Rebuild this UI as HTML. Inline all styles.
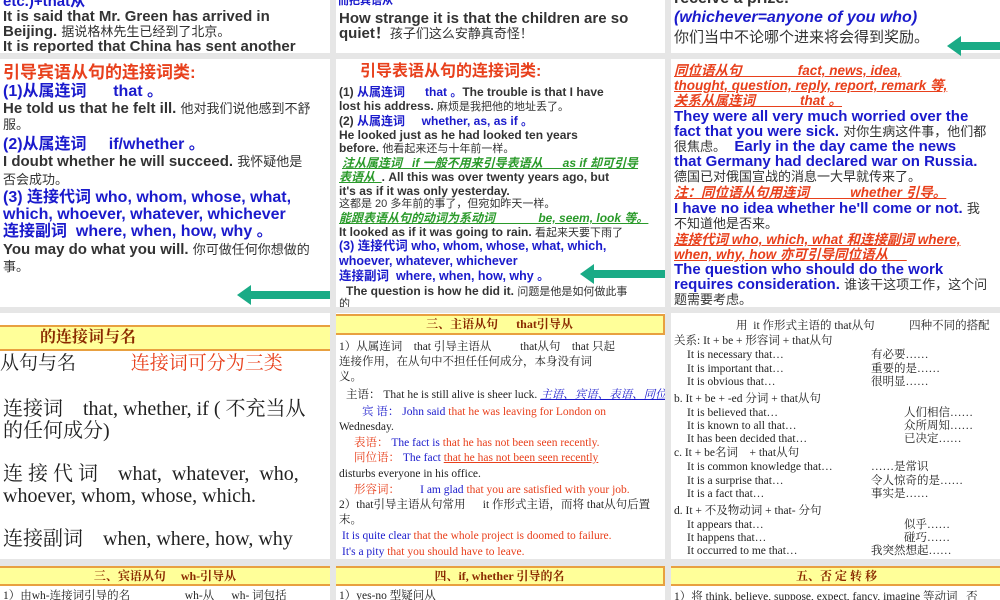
<!DOCTYPE html><html><head><meta charset="utf-8"><style>
body{margin:0;width:1000px;height:600px;background:#e6e6e6;overflow:hidden;position:relative;font-family:"Liberation Sans","Noto Sans CJK SC",sans-serif}
.p{position:absolute;background:#fff;overflow:hidden}
.t{position:absolute;white-space:nowrap;font-size:13px;font-weight:bold;color:#333;line-height:15px}
.b{color:#1a1acc}.r{color:#e8401c}.g{color:#2a9a2a}.i{font-style:italic;text-decoration:underline}
.s{font-family:"Liberation Serif","Noto Serif CJK SC",serif;font-weight:normal;font-size:11.5px;color:#222}
.hd{position:absolute;background:#ffff99;border:2px solid #e8a040;text-align:center;font-family:"Liberation Serif","Noto Serif CJK SC",serif;font-weight:bold;font-size:12px;color:#8a2a00}
.ar{position:absolute;width:0;height:0;border-top:10px solid transparent;border-bottom:10px solid transparent;border-right:14px solid #1aab86}
.ab{position:absolute;height:8px;background:#1aab86}
.L .t{font-size:15px}
.L .t .c{font-size:13px;font-weight:normal}
</style></head><body>
<div class="p L" style="left:0;top:0;width:330px;height:53px">
<div class="t b" style="left:3px;top:-6px">etc.)+that从</div>
<div class="t" style="left:3px;top:9px">It is said that Mr. Green has arrived in</div>
<div class="t" style="left:3px;top:24px">Beijing. <span class="c">据说格林先生已经到了北京。</span></div>
<div class="t" style="left:3px;top:39px">It is reported that China has sent another</div></div>
<div class="p L" style="left:336px;top:0;width:329px;height:53px">
<div class="t b" style="left:2px;top:-6px;font-size:11px">而把宾语从</div>
<div class="t" style="left:3px;top:11px">How strange it is that the children are so</div>
<div class="t" style="left:3px;top:26px">quiet！<span class="c">孩子们这么安静真奇怪！</span></div></div>
<div class="p" style="left:671px;top:0;width:329px;height:53px">
<div class="t" style="left:3px;top:-9px;font-size:16px">receive a prize.</div>
<div class="t b" style="left:3px;top:10px;font-size:16px;font-style:italic">(whichever=anyone of you who)</div>
<div class="t" style="left:3px;top:30px;font-weight:normal;font-size:15px">你们当中不论哪个进来将会得到奖励。</div></div>
<div class="ar" style="left:947px;top:36px"></div><div class="ab" style="left:960px;top:42px;width:40px"></div>

<div class="p L" style="left:0;top:59px;width:330px;height:248px">
<div class="t r" style="left:3px;top:6px;font-size:17px">引导宾语从句的连接词类:</div>
<div class="t b" style="left:3px;top:25px;font-size:16px">(1)从属连词 &nbsp;&nbsp;&nbsp;&nbsp; that 。</div>
<div class="t" style="left:3px;top:42px">He told us that he felt ill. <span class="c">他对我们说他感到不舒</span></div>
<div class="t c" style="left:3px;top:58px;font-size:13px;font-weight:normal">服。</div>
<div class="t b" style="left:3px;top:78px;font-size:16px">(2)从属连词 &nbsp;&nbsp;&nbsp; if/whether 。</div>
<div class="t" style="left:3px;top:95px">I doubt whether he will succeed. <span class="c">我怀疑他是</span></div>
<div class="t" style="left:3px;top:113px;font-size:13px;font-weight:normal">否会成功。</div>
<div class="t b" style="left:3px;top:131px;font-size:16px">(3) 连接代词 who, whom, whose, what,</div>
<div class="t b" style="left:3px;top:148px;font-size:16px">which, whoever, whatever, whichever</div>
<div class="t b" style="left:3px;top:165px;font-size:16px">连接副词 &nbsp;where, when, how, why 。</div>
<div class="t" style="left:3px;top:183px">You may do what you will. <span class="c">你可做任何你想做的</span></div>
<div class="t" style="left:3px;top:200px;font-size:13px;font-weight:normal">事。</div>
<div class="ar" style="left:237px;top:226px"></div><div class="ab" style="left:250px;top:232px;width:80px"></div></div>

<div class="p" style="left:336px;top:59px;width:329px;height:248px">
<div class="t r" style="left:24px;top:5px;font-size:16px">引导表语从句的连接词类:</div>
<div class="t" style="left:3px;top:26px;font-size:12px">(1) <span class="b">从属连词 &nbsp;&nbsp;&nbsp;&nbsp; that 。</span>The trouble is that I have</div>
<div class="t" style="left:3px;top:40px;font-size:12px">lost his address. <span style="font-weight:normal;font-size:11px">麻烦是我把他的地址丢了。</span></div>
<div class="t" style="left:3px;top:55px;font-size:12px">(2) <span class="b">从属连词 &nbsp;&nbsp;&nbsp; whether, as, as if 。</span></div>
<div class="t" style="left:3px;top:69px;font-size:12px">He looked just as he had looked ten years</div>
<div class="t" style="left:3px;top:82px;font-size:12px">before. <span style="font-weight:normal;font-size:11px">他看起来还与十年前一样。</span></div>
<div class="t g i" style="left:6px;top:97px;font-size:12px">注从属连词 &nbsp; if 一般不用来引导表语从 &nbsp;&nbsp;&nbsp;&nbsp; as if 却可引导</div>
<div class="t" style="left:3px;top:111px;font-size:12px"><span class="g i">表语从 &nbsp;</span>. All this was over twenty years ago, but</div>
<div class="t" style="left:3px;top:125px;font-size:12px">it's as if it was only yesterday.</div>
<div class="t" style="left:3px;top:138px;font-weight:normal;font-size:11px">这都是 20 多年前的事了，但宛如昨天一样。</div>
<div class="t g i" style="left:3px;top:152px;font-size:12px">能跟表语从句的动词为系动词 &nbsp;&nbsp;&nbsp;&nbsp;&nbsp;&nbsp;&nbsp;&nbsp;&nbsp;&nbsp;&nbsp; be, seem, look 等。</div>
<div class="t" style="left:3px;top:166px;font-size:12px">It looked as if it was going to rain. <span style="font-weight:normal;font-size:11px">看起来天要下雨了</span></div>
<div class="t b" style="left:3px;top:180px;font-size:12.5px">(3) 连接代词 who, whom, whose, what, which,</div>
<div class="t b" style="left:3px;top:195px;font-size:12.5px">whoever, whatever, whichever</div>
<div class="t b" style="left:3px;top:210px;font-size:12.5px">连接副词 &nbsp;where, when, how, why 。</div>
<div class="t" style="left:10px;top:225px;font-size:12px">The question is how he did it. <span style="font-weight:normal;font-size:11px">问题是他是如何做此事</span></div>
<div class="t" style="left:3px;top:238px;font-weight:normal;font-size:11px">的</div>
<div class="ar" style="left:244px;top:205px"></div><div class="ab" style="left:257px;top:211px;width:72px"></div></div>

<div class="p L" style="left:671px;top:59px;width:329px;height:248px">
<div class="t r i" style="left:3px;top:4px;font-size:13.5px">同位语从句 &nbsp;&nbsp;&nbsp;&nbsp;&nbsp;&nbsp;&nbsp;&nbsp;&nbsp;&nbsp;&nbsp;&nbsp;&nbsp; fact, news, idea,</div>
<div class="t r i" style="left:3px;top:19px;font-size:13.5px">thought, question, reply, report, remark 等,</div>
<div class="t r i" style="left:3px;top:34px;font-size:13.5px">关系从属连词 &nbsp;&nbsp;&nbsp;&nbsp;&nbsp;&nbsp;&nbsp;&nbsp;&nbsp;&nbsp; that 。</div>
<div class="t b" style="left:3px;top:50px">They were all very much worried over the</div>
<div class="t" style="left:3px;top:65px"><span class="b">fact that you were sick.</span> <span class="c">对你生病这件事，他们都</span></div>
<div class="t" style="left:3px;top:80px"><span class="c">很焦虑。</span> &nbsp;<span class="b">Early in the day came the news</span></div>
<div class="t b" style="left:3px;top:95px">that Germany had declared war on Russia.</div>
<div class="t" style="left:3px;top:110px;font-weight:normal;font-size:13px">德国已对俄国宣战的消息一大早就传来了。</div>
<div class="t r i" style="left:3px;top:126px;font-size:13.5px">注：同位语从句用连词 &nbsp;&nbsp;&nbsp;&nbsp;&nbsp;&nbsp;&nbsp;&nbsp;&nbsp; whether 引导。</div>
<div class="t" style="left:3px;top:142px"><span class="b">I have no idea whether he'll come or not.</span> <span class="c">我</span></div>
<div class="t" style="left:3px;top:157px;font-weight:normal;font-size:13px">不知道他是否来。</div>
<div class="t r i" style="left:3px;top:173px;font-size:13.5px">连接代词 who, which, what 和连接副词 where,</div>
<div class="t r i" style="left:3px;top:188px;font-size:13.5px">when, why, how 亦可引导同位语从 &nbsp;&nbsp;&nbsp;&nbsp;</div>
<div class="t b" style="left:3px;top:203px">The question who should do the work</div>
<div class="t" style="left:3px;top:218px"><span class="b">requires consideration.</span> <span class="c">谁该干这项工作，这个问</span></div>
<div class="t" style="left:3px;top:233px;font-weight:normal;font-size:13px">题需要考虑。</div></div>

<div class="p" style="left:0;top:313px;width:330px;height:246px">
<div class="hd" style="left:-2px;top:12px;width:330px;height:22px;line-height:22px;text-align:left;font-size:16px"><span style="margin-left:40px">的连接词与名</span></div>
<div class="t s g" style="left:0;top:40px;font-size:19px;line-height:22px">从句与名 <span class="r" style="margin-left:50px">连接词可分为三类</span></div>
<div class="t s b" style="left:3px;top:85px;font-size:20px;line-height:22px">连接词 &nbsp;&nbsp; that, whether, if ( 不充当从</div>
<div class="t s b" style="left:3px;top:107px;font-size:20px;line-height:22px">的任何成分)</div>
<div class="t s b" style="left:3px;top:150px;font-size:20px;line-height:22px">连 接 代 词 &nbsp;&nbsp; what, &nbsp;whatever, &nbsp;who,</div>
<div class="t s b" style="left:3px;top:172px;font-size:20px;line-height:22px">whoever, whom, whose, which.</div>
<div class="t s b" style="left:3px;top:215px;font-size:20px;line-height:22px">连接副词 &nbsp;&nbsp; when, where, how, why</div></div>

<div class="p" style="left:336px;top:313px;width:329px;height:246px">
<div class="hd" style="left:-2px;top:1px;width:327px;height:17px;line-height:17px">三、主语从句 &nbsp;&nbsp;&nbsp;&nbsp; that引导从</div>
<div class="t s b" style="left:3px;top:27px">1）从属连词 &nbsp;&nbsp; that 引导主语从 &nbsp;&nbsp;&nbsp;&nbsp;&nbsp;&nbsp;&nbsp;&nbsp; that从句 &nbsp;&nbsp; that 只起</div>
<div class="t s b" style="left:3px;top:42px">连接作用，在从句中不担任任何成分，本身没有词</div>
<div class="t s b" style="left:3px;top:57px">义。</div>
<div class="t s r" style="left:10px;top:75px">主语： That he is still alive is sheer luck. <span class="b i">主语、宾语、表语、同位语和形容词</span></div>
<div class="t s" style="left:26px;top:92px"><span class="b">宾 语： John said</span> <span class="r">that he was leaving for London on</span></div>
<div class="t s r" style="left:3px;top:107px">Wednesday.</div>
<div class="t s" style="left:18px;top:123px"><span class="r">表语：</span><span class="b"> The fact is</span> <span class="r">that he has not been seen recently.</span></div>
<div class="t s" style="left:18px;top:138px"><span class="r">同位语：</span><span class="b"> The fact</span> <span class="r" style="text-decoration:underline">that he has not been seen recently</span></div>
<div class="t s b" style="left:3px;top:154px">disturbs everyone in his office.</div>
<div class="t s" style="left:18px;top:170px"><span class="r">形容词：</span><span class="b"> &nbsp;&nbsp;&nbsp;&nbsp;&nbsp; I am glad</span> <span class="r">that you are satisfied with your job.</span></div>
<div class="t s b" style="left:3px;top:185px">2）that引导主语从句常用 &nbsp;&nbsp;&nbsp;&nbsp; it 作形式主语，而将 that从句后置</div>
<div class="t s b" style="left:3px;top:200px">末。</div>
<div class="t s" style="left:6px;top:216px"><span class="b">It is quite clear</span> <span class="r">that the whole project is doomed to failure.</span></div>
<div class="t s" style="left:6px;top:232px"><span class="b">It's a pity</span> <span class="r">that you should have to leave.</span></div></div>

<div class="p" style="left:671px;top:313px;width:329px;height:246px">
<div class="t s r" style="left:65px;top:6px">用 &nbsp;it 作形式主语的 that从句 &nbsp;&nbsp;&nbsp;&nbsp;&nbsp;&nbsp;&nbsp;&nbsp;&nbsp;&nbsp; 四种不同的搭配</div>
<div class="t s r" style="left:3px;top:21px">关系: It + be + 形容词 + that从句</div>
<div class="t s b" style="left:16px;top:35px">It is necessary that…</div><div class="t s b" style="left:200px;top:35px">有必要……</div>
<div class="t s b" style="left:16px;top:49px">It is important that…</div><div class="t s b" style="left:200px;top:49px">重要的是……</div>
<div class="t s b" style="left:16px;top:62px">It is obvious that…</div><div class="t s b" style="left:200px;top:62px">很明显……</div>
<div class="t s r" style="left:3px;top:79px">b. It + be + -ed 分词 + that从句</div>
<div class="t s b" style="left:16px;top:93px">It is believed that…</div><div class="t s b" style="left:233px;top:93px">人们相信……</div>
<div class="t s b" style="left:16px;top:106px">It is known to all that…</div><div class="t s b" style="left:233px;top:106px">众所周知……</div>
<div class="t s b" style="left:16px;top:119px">It has been decided that…</div><div class="t s b" style="left:233px;top:119px">已决定……</div>
<div class="t s r" style="left:3px;top:133px">c. It + be名词 &nbsp;&nbsp; + that从句</div>
<div class="t s b" style="left:16px;top:147px">It is common knowledge that…</div><div class="t s b" style="left:200px;top:147px">……是常识</div>
<div class="t s b" style="left:16px;top:161px">It is a surprise that…</div><div class="t s b" style="left:200px;top:161px">令人惊奇的是……</div>
<div class="t s b" style="left:16px;top:174px">It is a fact that…</div><div class="t s b" style="left:200px;top:174px">事实是……</div>
<div class="t s r" style="left:3px;top:191px">d. It + 不及物动词 + that- 分句</div>
<div class="t s b" style="left:16px;top:205px">It appears that…</div><div class="t s b" style="left:233px;top:205px">似乎……</div>
<div class="t s b" style="left:16px;top:218px">It happens that…</div><div class="t s b" style="left:233px;top:218px">碰巧……</div>
<div class="t s b" style="left:16px;top:231px">It occurred to me that…</div><div class="t s b" style="left:200px;top:231px">我突然想起……</div></div>

<div class="p" style="left:0;top:566px;width:330px;height:34px">
<div class="hd" style="left:-2px;top:0;width:330px;height:16px;line-height:16px">三、宾语从句 &nbsp;&nbsp;&nbsp; wh-引导从</div>
<div class="t s b" style="left:3px;top:23px">1）由wh-连接词引导的名 &nbsp;&nbsp;&nbsp;&nbsp;&nbsp;&nbsp;&nbsp;&nbsp;&nbsp;&nbsp;&nbsp;&nbsp;&nbsp;&nbsp;&nbsp;&nbsp;&nbsp; wh-从 &nbsp;&nbsp;&nbsp;&nbsp; wh- 词包括</div></div>
<div class="p" style="left:336px;top:566px;width:329px;height:34px">
<div class="hd" style="left:-2px;top:0;width:327px;height:16px;line-height:16px">四、if, whether 引导的名</div>
<div class="t s b" style="left:3px;top:23px">1）yes-no 型疑问从</div></div>
<div class="p" style="left:671px;top:566px;width:329px;height:34px">
<div class="hd" style="left:-2px;top:0;width:331px;height:16px;line-height:16px">五、否 定 转 移</div>
<div class="t s b" style="left:3px;top:24px">1）将 think, believe, suppose, expect, fancy, imagine 等动词 &nbsp; 否</div></div>
</body></html>
